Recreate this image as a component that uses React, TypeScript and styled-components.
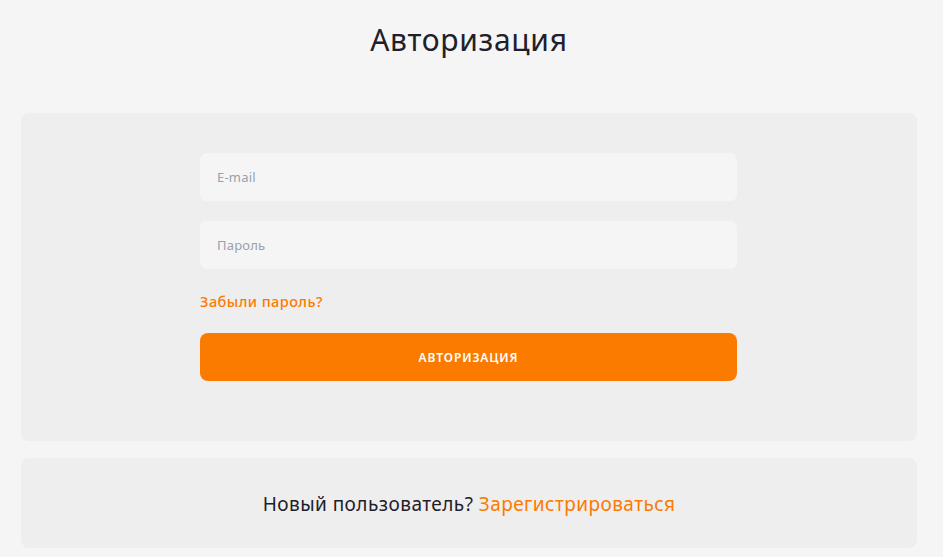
import styled, { createGlobalStyle } from 'styled-components';

const ORANGE = '#fb7a00';

const GlobalStyle = createGlobalStyle`
  html, body {
    margin: 0;
    padding: 0;
    background: #f5f5f5;
    font-family: 'Noto Sans', 'Open Sans', Arial, sans-serif;
    color: #1f2029;
  }
  * {
    box-sizing: border-box;
  }
`;

const Page = styled.main`
  display: flex;
  flex-direction: column;
  padding: 0 26px 0 21px;
`;

const Title = styled.h1`
  margin: 0;
  height: 113px;
  padding-top: 21px;
  text-align: center;
  font-size: 30px;
  font-weight: 400;
  line-height: 38px;
  letter-spacing: 0.7px;
  color: #1f2029;
`;

const Card = styled.section<{ $padding: string }>`
  background: #eeeeee;
  border-radius: 8px;
  padding: ${({ $padding }) => $padding};
`;

const Form = styled.form`
  width: 537px;
  display: flex;
  flex-direction: column;
`;

const Input = styled.input`
  height: 48px;
  margin-bottom: 20px;
  padding: 0 17px;
  border: none;
  outline: none;
  border-radius: 7px;
  background: #f5f5f5;
  font-family: inherit;
  font-size: 13px;
  letter-spacing: 0.2px;
  color: #1f2029;
  &::placeholder {
    color: #9aa0ad;
  }
`;

const ForgotLink = styled.a`
  align-self: flex-start;
  margin: 1px 0 21px;
  font-size: 14.5px;
  line-height: 22px;
  font-weight: 500;
  letter-spacing: 0.45px;
  color: ${ORANGE};
  text-decoration: none;
`;

const SubmitButton = styled.button`
  height: 48px;
  border: none;
  border-radius: 8px;
  background: ${ORANGE};
  color: #ffffff;
  font-family: inherit;
  font-size: 12px;
  font-weight: 600;
  letter-spacing: 0.9px;
  text-transform: uppercase;
`;

const Gap = styled.div`
  height: 17px;
`;

const RegisterText = styled.p`
  margin: 0;
  text-align: center;
  font-size: 19px;
  line-height: 24px;
  letter-spacing: 0.45px;
  color: #1f2029;
`;

const RegisterLink = styled.a`
  color: ${ORANGE};
  text-decoration: none;
`;

const App = () => {
  return (
    <>
      <GlobalStyle />
      <Page>
        <Title>Авторизация</Title>
        <Card $padding="40px 0 60px 179px">
          <Form onSubmit={(e) => e.preventDefault()}>
            <Input type="email" placeholder="E-mail" />
            <Input type="password" placeholder="Пароль" />
            <ForgotLink href="#">Забыли пароль?</ForgotLink>
            <SubmitButton type="submit">Авторизация</SubmitButton>
          </Form>
        </Card>
        <Gap />
        <Card $padding="34px 0 32px">
          <RegisterText>
            Новый пользователь? <RegisterLink href="#">Зарегистрироваться</RegisterLink>
          </RegisterText>
        </Card>
      </Page>
    </>
  );
};

export default App;
